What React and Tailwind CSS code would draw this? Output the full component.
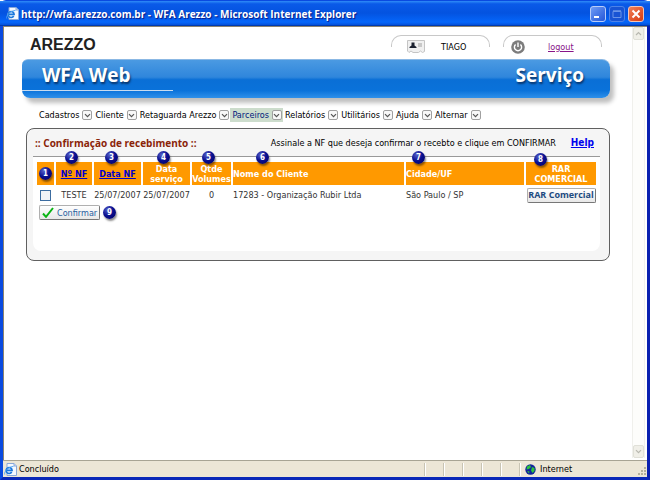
import React from "react";

const MENU = ["Cadastros", "Cliente", "Retaguarda Arezzo", "Parceiros", "Relatórios", "Utilitários", "Ajuda", "Alternar"];

function IePage() {
  return (
    <svg viewBox="0 0 13 13" className="size-[13px] shrink-0" aria-hidden="true">
      <path d="M3 .5h7l2.500 2.500v9.500H3z" fill="#f4f8ff" stroke="#8aa8d8" />
      <path d="M10 .5V3h2.500" fill="#c9dcf8" stroke="#8aa8d8" />
      <circle cx="5" cy="7.500" r="3.600" fill="#eaf4ff" />
      <path d="M7.700 9a3 3 0 1 1 .4-1.600H2.500" fill="none" stroke="#1c78dc" strokeWidth="1.600" />
      <path d="M.7 11.500C-.2 8.500 5 3.200 9.500 3.500" fill="none" stroke="#4aa0f0" strokeWidth="0.900" />
    </svg>
  );
}

function Chevron({ up, color = "#555", className = "size-[7px]" }) {
  return (
    <svg viewBox="0 0 7 7" className={className} aria-hidden="true">
      <path d={up ? "M1 5l2.500-2.500L6 5" : "M1 2.200l2.500 2.500L6 2.200"} fill="none" stroke={color} strokeWidth="1.200" />
    </svg>
  );
}

function Badge({ n, className = "" }) {
  return (
    <span
      className={`flex size-[13px] items-center justify-center rounded-full bg-[radial-gradient(circle_at_35%_30%,#5560c8,#0a0f90_45%,#000060)] text-[8px] leading-none font-bold text-white shadow-[1px_2px_2px_rgba(0,0,0,0.45)] ${className}`}
    >
      {n}
    </span>
  );
}

function WindowButton({ label, className, children }) {
  return (
    <button aria-label={label} className={`flex size-4 items-center justify-center rounded-[3px] border ${className}`}>
      <svg viewBox="0 0 14 14" className="size-[14px]" aria-hidden="true">
        {children}
      </svg>
    </button>
  );
}

function TitleBar() {
  return (
    <header className="flex h-[25px] shrink-0 items-center gap-[2px] border-b border-[#003bb0] bg-[linear-gradient(#2f8cf8,#0a5ae8_12%,#0453e0_50%,#0566fa_88%,#0450d8)] pt-px pr-[6px] pl-[6px]">
      <IePage />
      <h1 className="flex-1 font-['Open_Sans',sans-serif] text-[10px] leading-4 font-bold whitespace-nowrap text-white [text-shadow:1px_1px_1px_#0a1883]">
        http://wfa.arezzo.com.br - WFA Arezzo - Microsoft Internet Explorer
      </h1>
      <div className="flex gap-[3px]">
        <WindowButton label="Minimizar" className="border-[#b8ccf8] bg-[linear-gradient(135deg,#6f9cf5,#2456d8)]">
          <path d="M3 10h5" stroke="#fff" strokeWidth="2" />
        </WindowButton>
        <WindowButton label="Maximizar" className="border-[#4c82e8] bg-[#1854d4]">
          <path d="M3 4.500h8v6H3z" fill="none" stroke="#6a94e8" />
          <path d="M3 4h8" stroke="#6a94e8" strokeWidth="1.500" />
        </WindowButton>
        <WindowButton label="Fechar" className="border-[#f4c4b4] bg-[linear-gradient(135deg,#f08058,#d83a10)]">
          <path d="M3.500 3.500l7 7M10.500 3.500l-7 7" stroke="#fff" strokeWidth="2" />
        </WindowButton>
      </div>
    </header>
  );
}

function TopTab({ children }) {
  return (
    <div className="relative flex h-[23px] w-[99px] items-center">
      <div className="absolute inset-x-0 top-0 h-3 rounded-t-[10px] border border-b-0 border-[#c8c8c8]" />
      {children}
    </div>
  );
}

function SiteHeader() {
  return (
    <>
      <div className="flex h-[24px] items-start justify-between pr-[14px] pl-2">
        <div className="font-['Liberation_Sans',Arial,sans-serif] text-[16px] leading-[20px] font-bold text-[#222]">AREZZO</div>
        <div className="flex gap-[13px]">
          <TopTab>
            <svg viewBox="0 0 18 13" className="ml-4 h-[13px] w-[18px]" aria-hidden="true">
              <path d="M.5.5h17v11l-2 1-2-1.500-2 1.500H6l-2-1.500-2 1.500L.5 11z" fill="#f0f0f0" stroke="#c4c4c4" />
              <path d="M4.500 2.500h3v3l2 1.500v1h-7V7l2-1.500z" fill="#1c2230" />
              <path d="M11 4h4M11 6h4" stroke="#bbb" strokeWidth="1.500" />
            </svg>
            <span className="ml-4">TIAGO</span>
          </TopTab>
          <TopTab>
            <svg viewBox="0 0 14 14" className="ml-2 size-[14px]" aria-hidden="true">
              <circle cx="7" cy="7" r="6.800" fill="#7c7c7c" />
              <path d="M4.600 4.400a3.600 3.600 0 1 0 4.800 0M7 2.500V7" fill="none" stroke="#fff" strokeWidth="1.400" />
            </svg>
            <a href="#logout" className="ml-[23px] text-[#881488] underline">logout</a>
          </TopTab>
        </div>
      </div>
      <div className="mr-[6px] flex h-[39px] items-start justify-between rounded-lg rounded-tl-md border-t border-[#8bb8e4] bg-[linear-gradient(#4b9ae2,#2f86dc_45%,#0a6fd6_52%,#0a72da_80%,#2f90ea)] pr-[26px] font-['Open_Sans',sans-serif] text-[19px] leading-[31px] font-bold text-white shadow-[4px_5px_4px_rgba(0,0,0,0.25)] [text-shadow:1px_2px_2px_#08356c]">
        <div className="w-[151px] border-b border-[#c8dcf0] pl-5 leading-[30px]">WFA Web</div>
        <div>Serviço</div>
      </div>
    </>
  );
}

function Menu() {
  return (
    <nav className="mt-[10px] flex flex-wrap pl-[15px]">
      {MENU.map((m) => (
        <button
          key={m}
          aria-haspopup="menu"
          className={`flex h-[14px] items-center gap-[3px] pr-px pl-[2px] ${m === "Parceiros" ? "bg-[#ccdccc] text-[#00207c]" : "text-black"}`}
        >
          {m}
          <span className="flex size-[10px] items-center justify-center rounded-[2px] border border-[#a0a0a0] bg-[#f8f8f8]">
            <Chevron />
          </span>
        </button>
      ))}
    </nav>
  );
}

function Th({ n, pos, className = "", children }) {
  return (
    <th className={`relative h-[23px] bg-[#ff9900] p-0 leading-[10px] font-bold text-white ${className}`}>
      {children}
      <Badge n={n} className={`absolute ${pos}`} />
    </th>
  );
}

function Panel() {
  return (
    <section className="mt-[6px] mr-[6px] ml-1 rounded-lg border border-[#606060] bg-[#f5f5f5] pr-[9px] pb-[9px] pl-[6px]">
      <div className="flex h-7 items-center border-b border-[#999] pr-[6px] pl-[2px]">
        <h2 className="font-['Open_Sans',sans-serif] text-[10px] font-bold whitespace-nowrap text-[#8a2408]">:: Confirmação de recebimento ::</h2>
        <p className="ml-auto text-right text-black">Assinale a NF que deseja confirmar o recebto e clique em CONFIRMAR</p>
        <a href="#help" className="ml-[15px] text-[10px] font-bold text-[#0000ee] underline">Help</a>
      </div>
      <div className="min-h-[94px] rounded-b-lg bg-white px-[2px] pt-[3px]">
        <table className="w-full table-fixed border-separate border-spacing-x-[2px] border-spacing-y-[2px] text-[#333]">
          <colgroup>
            <col className="w-[17px]" />
            <col className="w-[36px]" />
            <col className="w-[47px]" />
            <col className="w-[47px]" />
            <col className="w-[39px]" />
            <col />
            <col className="w-[118px]" />
            <col className="w-[70px]" />
          </colgroup>
          <thead>
            <tr>
              <Th n={1} pos="top-[5px] left-[2px]" />
              <Th n={2} pos="-top-[11px] left-[9px]"><a href="#nf" className="text-[#0000cc] underline">Nº NF</a></Th>
              <Th n={3} pos="-top-[11px] left-[11px]"><a href="#data" className="text-[#0000cc] underline">Data NF</a></Th>
              <Th n={4} pos="-top-[11px] left-[14px]">Data<br />serviço</Th>
              <Th n={5} pos="-top-[11px] left-[10px]">Qtde<br />Volumes</Th>
              <Th n={6} pos="-top-[11px] left-[23px]" className="text-left">Nome do Cliente</Th>
              <Th n={7} pos="-top-[11px] left-[6px]" className="text-left">Cidade/UF</Th>
              <Th n={8} pos="-top-[9px] left-[8px]">RAR<br />COMERCIAL</Th>
            </tr>
          </thead>
          <tbody>
            <tr className="h-4 text-center whitespace-nowrap">
              <td className="p-0">
                <input type="checkbox" aria-label="Selecionar NF TESTE" className="mx-auto block size-[11px] appearance-none border border-[#3c6ca0] bg-[#f0f2f6]" />
              </td>
              <td className="p-0">TESTE</td>
              <td className="p-0">25/07/2007</td>
              <td className="p-0">25/07/2007</td>
              <td className="p-0">0</td>
              <td className="p-0 text-left">17283 - Organização Rubir Ltda</td>
              <td className="p-0 text-left">São Paulo / SP</td>
              <td className="p-0">
                <button className="mx-auto block h-[15px] w-[69px] rounded-[2px] border border-[#b0b0b0] border-r-[#777] border-b-[#777] bg-[linear-gradient(#fff,#e8e8e8)] font-['Open_Sans',sans-serif] font-bold text-[#1c4a80]">
                  RAR Comercial
                </button>
              </td>
            </tr>
          </tbody>
        </table>
        <div className="flex items-center gap-[3px] pl-1">
          <button className="flex h-[15px] w-[61px] items-center gap-[3px] rounded-[2px] border border-[#b0b0b0] border-r-[#777] border-b-[#777] bg-[linear-gradient(#fff,#e8e8e8)] pl-[2px] text-[#2860a0]">
            <svg viewBox="0 0 12 11" className="h-[11px] w-3 shrink-0" aria-hidden="true">
              <path d="M1 6.500l3 3.300L11 1" fill="none" stroke="#0ab414" strokeWidth="2" />
            </svg>
            Confirmar
          </button>
          <Badge n={9} />
        </div>
      </div>
    </section>
  );
}

function ScrollBar() {
  const btn = "flex h-[13px] items-center justify-center rounded-[2px] border border-[#e0e0d8] bg-[#f0efe8]";
  return (
    <div className="mr-[2px] mb-[2px] flex w-[13px] shrink-0 flex-col justify-between border-x border-[#f0f0ec] bg-[#fdfdfb]">
      <button aria-label="Rolar para cima" className={btn}><Chevron up color="#b8b8b0" /></button>
      <button aria-label="Rolar para baixo" className={btn}><Chevron color="#b8b8b0" /></button>
    </div>
  );
}

function StatusBar() {
  return (
    <footer className="flex h-[17px] shrink-0 items-center border-t border-[#a8a494] bg-[#ece6d6] pl-px text-black">
      <IePage />
      <span className="ml-[2px] flex-1">Concluído</span>
      {[1, 2, 3, 4, 5].map((i) => (
        <span key={i} className="h-[13px] w-[19px] border-l border-[#c8c4b4] shadow-[inset_1px_0_#fff]" />
      ))}
      <span className="flex h-[13px] w-[119px] items-center gap-1 border-l border-[#c8c4b4] pl-[5px] shadow-[inset_1px_0_#fff]">
        <svg viewBox="0 0 11 11" className="size-[11px]" aria-hidden="true">
          <circle cx="5.500" cy="5.500" r="5.200" fill="#10249c" />
          <path d="M2 2.500L5 1l1 2-2 2-2.500.5zM7 3l2.500 1v3L7.500 9 6 6.500zM2 7l2.500.5L4 9.500z" fill="#2cc43c" />
        </svg>
        Internet
      </span>
      <svg viewBox="0 0 9 9" className="mt-1 size-[9px]" aria-hidden="true">
        <path d="M6 0h2v2H6zM3 3h2v2H3zM6 3h2v2H6zM0 6h2v2H0zM3 6h2v2H3zM6 6h2v2H6z" fill="#b4b09c" />
      </svg>
    </footer>
  );
}

export default function App() {
  return (
    <div className="flex min-h-screen flex-col rounded-t-md bg-[#0a4ae0] pt-px font-['DejaVu_Sans_Condensed','DejaVu_Sans',sans-serif] text-[9px] leading-[12px]">
      <TitleBar />
      <div className="flex flex-1 flex-col border-r-[3px] border-b-[3px] border-l-[3px] border-[#0a4ae0] border-r-[#0a20b0] border-b-[#0a28b8]">
        <div className="flex flex-1 border-t border-l border-[#8c8470] bg-white">
          <main className="min-w-0 flex-1 pt-2 pr-4 pl-[18px]">
            <SiteHeader />
            <Menu />
            <Panel />
          </main>
          <ScrollBar />
        </div>
        <StatusBar />
      </div>
    </div>
  );
}
